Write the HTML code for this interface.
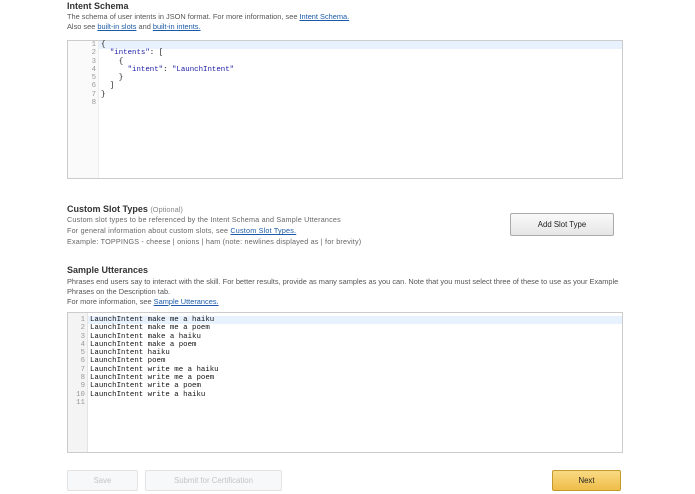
<!DOCTYPE html>
<html><head><style>
body{margin:0;width:695px;height:494px;background:#fff;font-family:"Liberation Sans",sans-serif;color:#555;position:relative;overflow:hidden}
.a{position:absolute;white-space:nowrap}
.t{font-size:9px;font-weight:bold;color:#333}
.d{font-size:7.4px;color:#555}
.sl{font-size:7.2px;letter-spacing:0.2px;color:#666}
a{color:#1a5aa8;text-decoration:underline}
.ed{position:absolute;left:67px;width:554px;border:1px solid #ccc;background:#fff}
.g{position:absolute;left:0;top:0;bottom:0;background:#f4f4f4;border-right:1px solid #e4e4e4}
.ln{position:absolute;left:0;width:95%;font-family:"Liberation Mono",monospace;font-size:7.4px;line-height:8.3px;color:#111}
.ln span{display:inline-block;text-align:right;color:#999}
.s{color:#1a1aa6}
.hl{position:absolute;right:0;height:8.3px;background:#e8f2ff}
.btn{position:absolute;font-size:7.8px;text-align:center;border-radius:2px}
</style></head><body>
<div class="a t" style="left:67px;top:1px">Intent Schema</div>
<div class="a d" style="left:67px;top:12px">The schema of user intents in JSON format. For more information, see <a>Intent Schema.</a></div>
<div class="a d" style="left:67px;top:22px">Also see <a>built-in slots</a> and <a>built-in intents.</a></div>

<div class="ed" style="top:40px;height:137px">
<div class="g" style="width:30px;background:#fafafa;border-right:1px solid #eee"></div>
<div class="hl" style="top:0;left:31px"></div>
<div class="ln" style="top:0">
<div><span style="width:28px;margin-right:5px">1</span>{</div>
<div><span style="width:28px;margin-right:5px">2</span><i class="s" style="font-style:normal">&nbsp;&nbsp;"intents"</i>: [</div>
<div><span style="width:28px;margin-right:5px">3</span>&nbsp;&nbsp;&nbsp;&nbsp;{</div>
<div><span style="width:28px;margin-right:5px">4</span><i class="s" style="font-style:normal">&nbsp;&nbsp;&nbsp;&nbsp;&nbsp;&nbsp;"intent"</i>: <i class="s" style="font-style:normal">"LaunchIntent"</i></div>
<div><span style="width:28px;margin-right:5px">5</span>&nbsp;&nbsp;&nbsp;&nbsp;}</div>
<div><span style="width:28px;margin-right:5px">6</span>&nbsp;&nbsp;]</div>
<div><span style="width:28px;margin-right:5px">7</span>}</div>
<div><span style="width:28px;margin-right:5px">8</span></div>
</div></div>

<div class="a t" style="left:67px;top:204px">Custom Slot Types <span style="font-weight:normal;color:#888;font-size:7.4px">(Optional)</span></div>
<div class="a sl" style="left:67px;top:215px">Custom slot types to be referenced by the Intent Schema and Sample Utterances</div>
<div class="a sl" style="left:67px;top:226px">For general information about custom slots, see <a>Custom Slot Types.</a></div>
<div class="a sl" style="left:67px;top:237px">Example: TOPPINGS - cheese | onions | ham (note: newlines displayed as | for brevity)</div>
<div class="btn" style="left:510px;top:213px;width:102px;height:21px;line-height:21px;border:1px solid #aaa;background:linear-gradient(#f9f9f9,#e6e6e6);color:#222">Add Slot Type</div>

<div class="a t" style="left:67px;top:265px">Sample Utterances</div>
<div class="a d" style="left:67px;top:277px">Phrases end users say to interact with the skill. For better results, provide as many samples as you can. Note that you must select three of these to use as your Example</div>
<div class="a d" style="left:67px;top:287px">Phrases on the Description tab.</div>
<div class="a d" style="left:67px;top:297px">For more information, see <a>Sample Utterances.</a></div>

<div class="ed" style="top:312px;height:139px">
<div class="g" style="width:19px"></div>
<div class="hl" style="top:3px;left:20px"></div>
<div class="ln" style="top:3px">
<div><span style="width:17px;margin-right:5px">1</span>LaunchIntent make me a haiku</div>
<div><span style="width:17px;margin-right:5px">2</span>LaunchIntent make me a poem</div>
<div><span style="width:17px;margin-right:5px">3</span>LaunchIntent make a haiku</div>
<div><span style="width:17px;margin-right:5px">4</span>LaunchIntent make a poem</div>
<div><span style="width:17px;margin-right:5px">5</span>LaunchIntent haiku</div>
<div><span style="width:17px;margin-right:5px">6</span>LaunchIntent poem</div>
<div><span style="width:17px;margin-right:5px">7</span>LaunchIntent write me a haiku</div>
<div><span style="width:17px;margin-right:5px">8</span>LaunchIntent write me a poem</div>
<div><span style="width:17px;margin-right:5px">9</span>LaunchIntent write a poem</div>
<div><span style="width:17px;margin-right:5px">10</span>LaunchIntent write a haiku</div>
<div><span style="width:17px;margin-right:5px">11</span></div>
</div></div>

<div class="btn" style="left:67px;top:470px;width:69px;height:19px;line-height:19px;border:1px solid #e3e3e3;background:#f7f8f9;color:#c4c4c4">Save</div>
<div class="btn" style="left:145px;top:470px;width:135px;height:19px;line-height:19px;border:1px solid #e3e3e3;background:#f7f8f9;color:#c4c4c4">Submit for Certification</div>
<div class="btn" style="left:552px;top:470px;width:67px;height:19px;line-height:19px;border:1px solid #c59a2c;background:linear-gradient(#f9da84,#efbd48);color:#222">Next</div>
</body></html>
